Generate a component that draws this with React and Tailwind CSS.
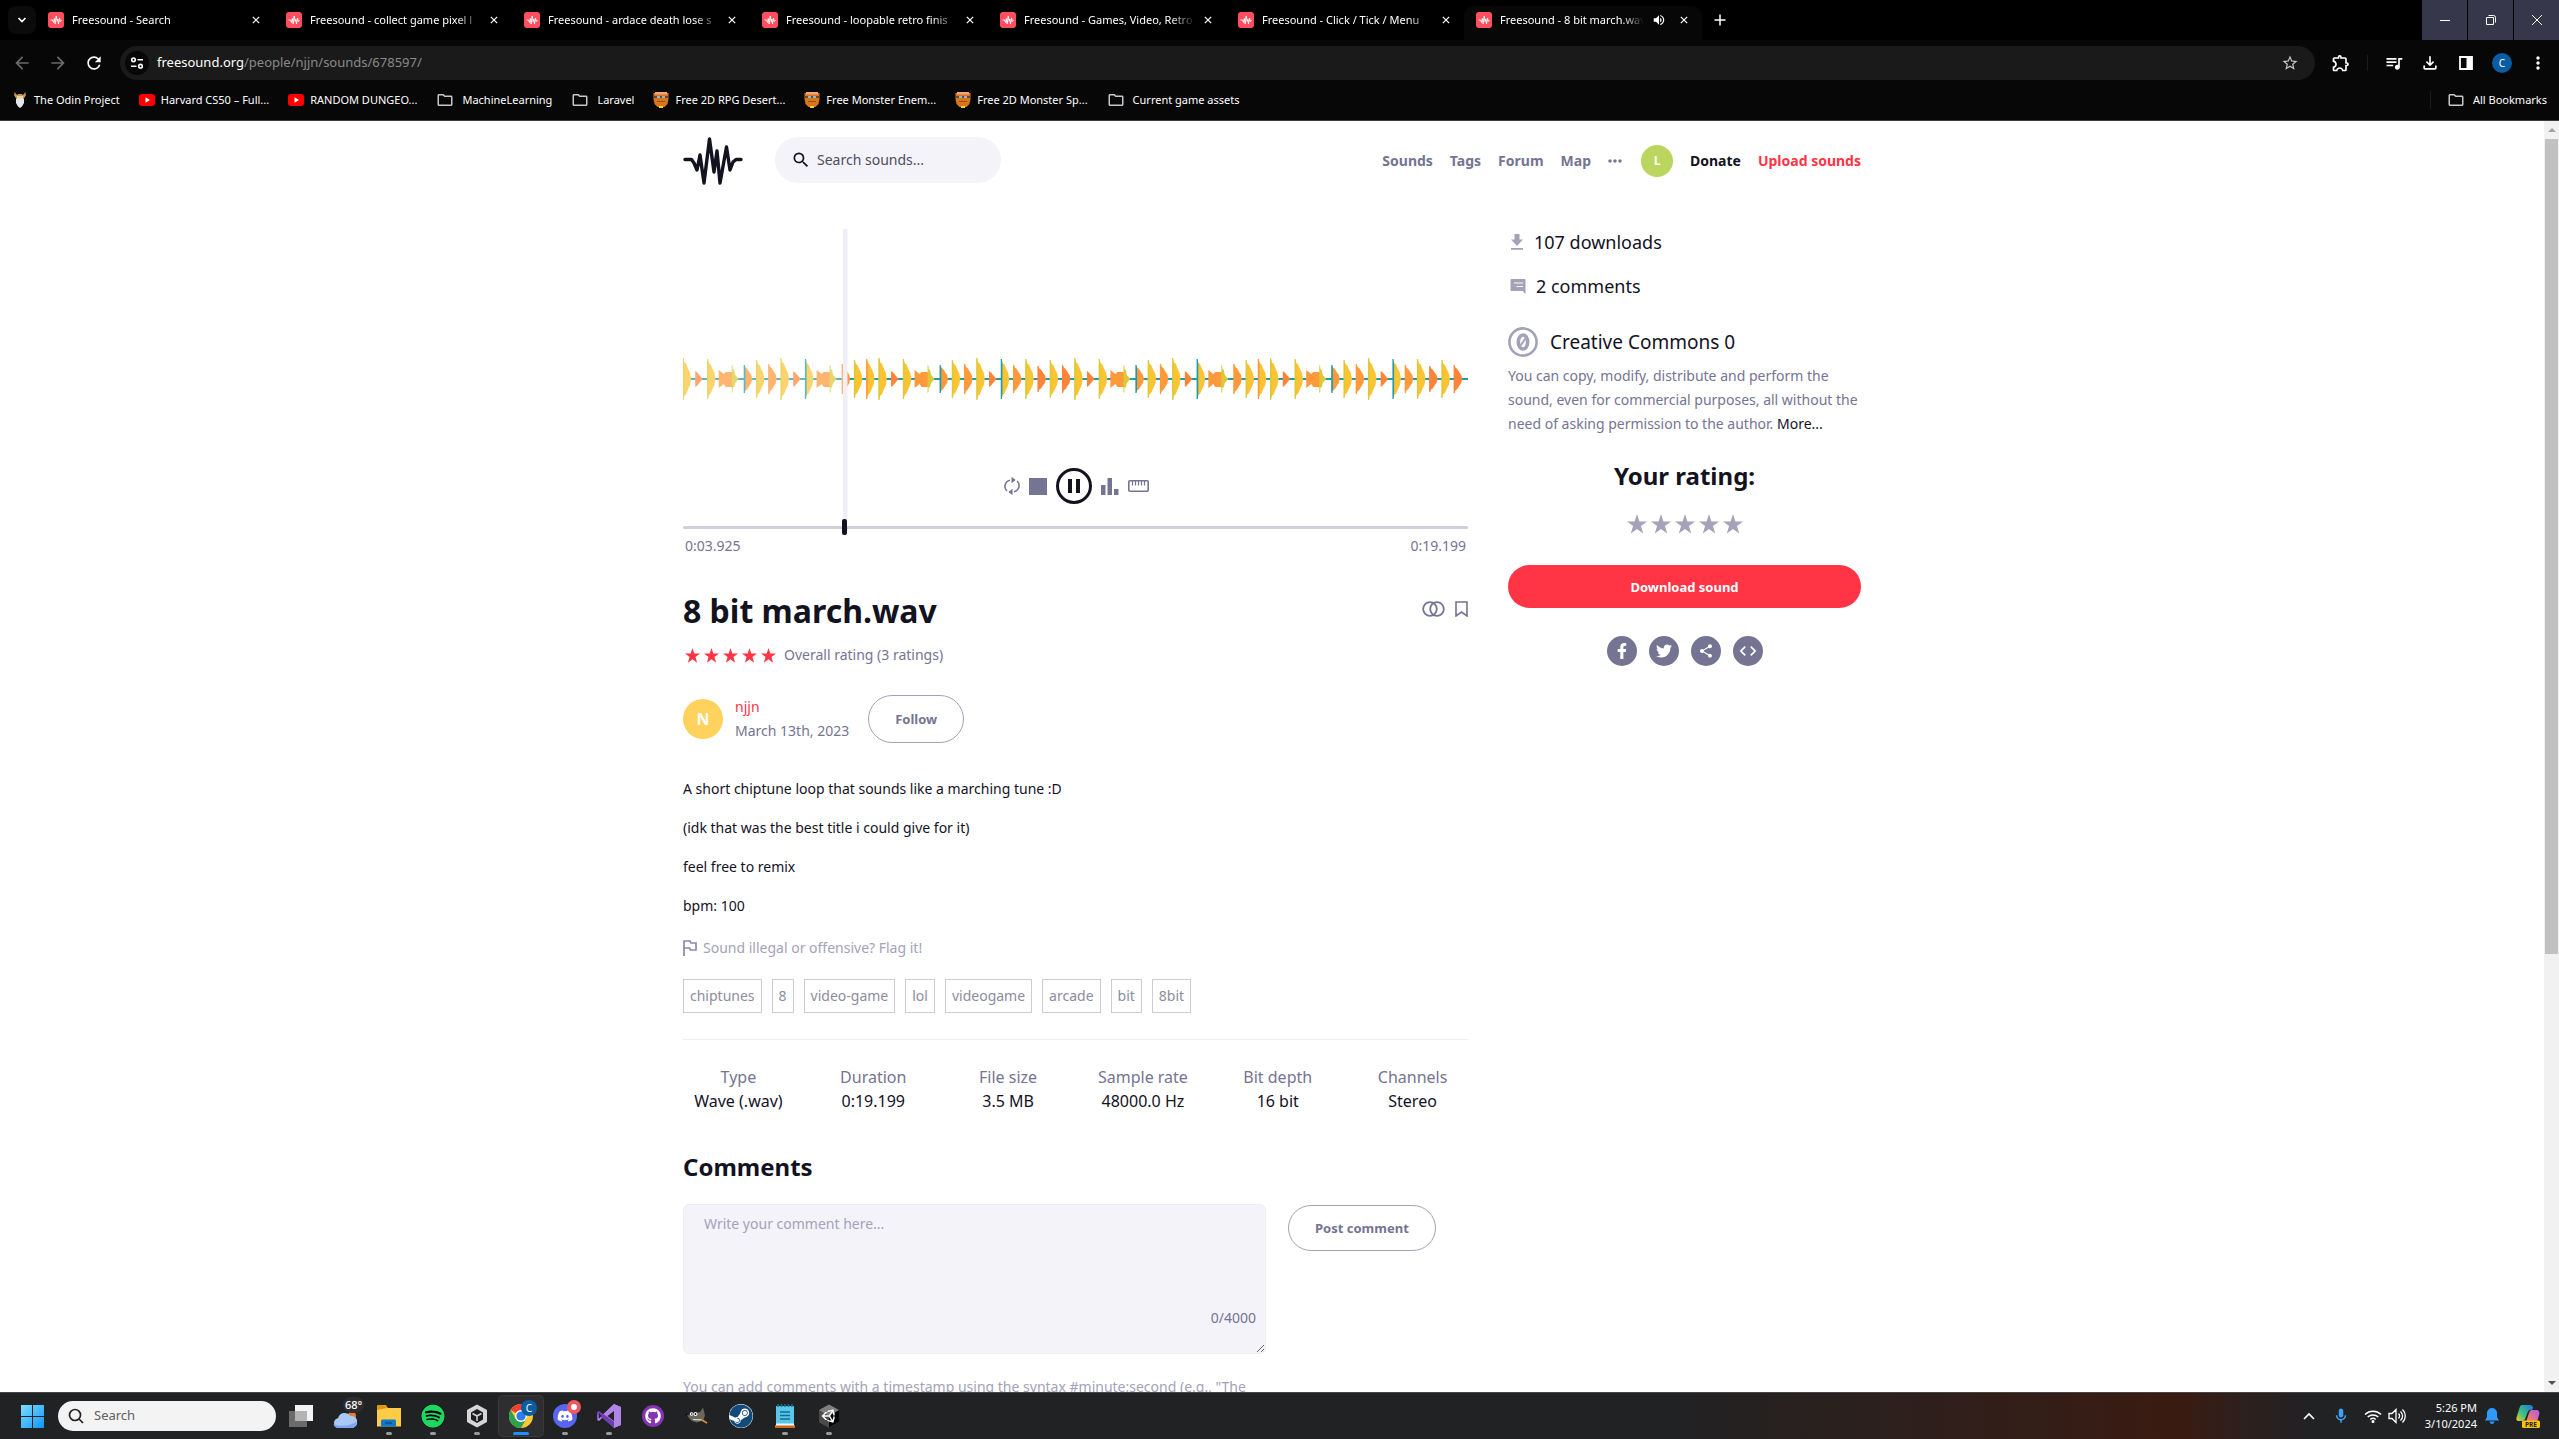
import React from "react";
import {
  MdArrowBack, MdArrowForward, MdRefresh, MdStarBorder, MdOutlineExtension, MdQueueMusic,
  MdOutlineFileDownload, MdMoreVert, MdVolumeUp, MdOutlineFolder, MdSearch, MdMoreHoriz,
  MdShare, MdCode, MdOutlineMic,
} from "react-icons/md";
import { FaSpotify, FaUnity, FaDiscord, FaGithub, FaSteam, FaTwitter, FaFacebookF } from "react-icons/fa";

const TABS = [
  "Freesound - Search",
  "Freesound - collect game pixel l",
  "Freesound - ardace death lose s",
  "Freesound - loopable retro finis",
  "Freesound - Games, Video, Retro",
  "Freesound - Click / Tick / Menu",
  "Freesound - 8 bit march.wav",
];

const BOOKMARKS = [
  ["odin", "The Odin Project"],
  ["youtube", "Harvard CS50 – Full..."],
  ["youtube", "RANDOM DUNGEO..."],
  ["folder", "MachineLearning"],
  ["folder", "Laravel"],
  ["monster", "Free 2D RPG Desert..."],
  ["monster", "Free Monster Enem..."],
  ["monster", "Free 2D Monster Sp..."],
  ["folder", "Current game assets"],
];

const WAVE_PATH = "M2 22.500H8.500L11 26L14 33L17 18L21 46L26.500 2L31 35L34 14L37 46L43.500 10L47 33L50 25L53 22.500H58";

function Favicon() {
  return (
    <svg viewBox="0 0 16 16" className="size-4 shrink-0">
      <rect width="16" height="16" rx="3" fill="#ff4f5e" />
      <path d="M2.500 8H4.500L5.500 10.500L6.300 6.500L7.200 12L8.200 4L9.200 9.500L9.800 7L10.500 12L11.500 6L12.300 9.500L13.500 8" fill="none" stroke="#fff" strokeWidth=".9" strokeLinejoin="round" />
    </svg>
  );
}

function CloseIcon({ className }) {
  return (
    <svg viewBox="0 0 10 10" className={className}>
      <path d="M1 1l8 8M9 1l-8 8" stroke="currentColor" strokeWidth="1.500" />
    </svg>
  );
}

function BookmarkIcon({ kind }) {
  if (kind === "folder") return <MdOutlineFolder className="mr-0.5 size-[18px] shrink-0 text-[#c7c7c7]" />;
  if (kind === "youtube")
    return (
      <svg viewBox="0 0 16 16" className="size-4 shrink-0">
        <rect y="2" width="16" height="12" rx="3" fill="#f00" />
        <path d="M6.500 5.200v5.600L11 8z" fill="#fff" />
      </svg>
    );
  if (kind === "odin")
    return (
      <svg viewBox="0 0 16 16" className="size-4 shrink-0">
        <path d="M2.500 0L5 3L6.500 2H9.500L11 3L13.500 0L13.800 3.500L11.500 7H4.500L2.200 3.500Z" fill="#c9994d" />
        <path d="M5 4h6v4H5z" fill="#f0cf9e" />
        <path d="M4 7l2-1 2 1 2-1 2 1v4l-2 3.500-2 1.500-2-1.500-2-3.500z" fill="#e4e6e8" />
      </svg>
    );
  return (
    <svg viewBox="0 0 16 16" className="size-4 shrink-0">
      <path d="M.5 1h15v6l-1 5-3 3h-7l-3-3-1-5z" fill="#d9761d" />
      <path d="M2 0h12v2.500H2z" fill="#f2a57b" />
      <path d="M1 4h14v2H1z" fill="#6b4a28" />
      <rect x="4" y="4" width="3" height="2" fill="#8fb7c4" />
      <rect x="9" y="4" width="3" height="2" fill="#8fb7c4" />
      <path d="M4 9h8v1H4z" fill="#9d4d0c" />
      <path d="M6 14h4v2H6z" fill="#f3d22b" />
    </svg>
  );
}

function BrowserChrome() {
  return (
    <header className="shrink-0 border-b border-[#3c3c3c] bg-[#070707] text-[11px] text-white">
      <div className="flex h-10 bg-black">
        <div className="flex w-9 items-center justify-end">
          <button aria-label="Search tabs" className="flex size-7 items-center justify-center rounded-lg bg-[#0b0b0b]">
            <svg viewBox="0 0 10 10" className="size-2.5"><path d="M1.500 3l3.500 3.500L8.500 3" fill="none" stroke="#fff" strokeWidth="1.700" /></svg>
          </button>
        </div>
        <div role="tablist" className="flex min-w-0">
          {TABS.map((title, i) => {
            const active = i === TABS.length - 1;
            return (
              <div
                key={title}
                role="tab"
                aria-selected={active}
                className={
                  "mt-1.5 flex w-[238px] min-w-0 items-center gap-2 rounded-t-[10px] pr-3.5 pb-1.5 pl-3 " +
                  (active ? "bg-[#070707]" : "")
                }
              >
                <Favicon />
                <span className="min-w-0 flex-1 overflow-hidden mask-r-from-85% whitespace-nowrap">{title}</span>
                {active && <MdVolumeUp className="size-3.5 shrink-0" />}
                <button aria-label={"Close " + title} className={active ? "ml-1.5 shrink-0" : "shrink-0"}><CloseIcon className="size-2" /></button>
              </div>
            );
          })}
        </div>
        <button aria-label="New tab" className="ml-3 flex items-center">
          <svg viewBox="0 0 12 12" className="size-3"><path d="M6 .5v11M.5 6h11" stroke="#fff" strokeWidth="1.500" /></svg>
        </button>
        <div className="ml-auto flex gap-px">
          <button aria-label="Minimize" className="flex w-[45px] items-center justify-center bg-[#36374a]">
            <svg viewBox="0 0 10 10" className="size-2.5"><path d="M0 5.500h10" stroke="#fff" /></svg>
          </button>
          <button aria-label="Restore" className="flex w-[45px] items-center justify-center bg-[#36374a]">
            <svg viewBox="0 0 10 10" className="size-2.5"><path d="M.5 2.500h7v7h-7zM2.500 .5h5a2 2 0 0 1 2 2v5" fill="none" stroke="#fff" /></svg>
          </button>
          <button aria-label="Close window" className="flex w-[45px] items-center justify-center bg-[#36374a]">
            <svg viewBox="0 0 10 10" className="size-2.5"><path d="M0 0l10 10M10 0L0 10" stroke="#fff" /></svg>
          </button>
        </div>
      </div>

      <div className="flex h-10 items-center pt-1.5 pl-3 pr-[11px]">
        <button aria-label="Back"><MdArrowBack className="size-5 text-[#6b6b6b]" /></button>
        <button aria-label="Forward" className="ml-4"><MdArrowForward className="size-5 text-[#6b6b6b]" /></button>
        <button aria-label="Reload" className="ml-4"><MdRefresh className="size-5" /></button>
        <div className="ml-4 flex h-[34px] flex-1 items-center rounded-full bg-[#1a1a1a] pl-[5px] pr-4">
          <button aria-label="View site information" className="flex size-6 items-center justify-center rounded-full bg-[#070707]">
            <svg viewBox="0 0 14 14" className="size-3.5" fill="none" stroke="#fff" strokeWidth="1.600">
              <circle cx="3.500" cy="3.800" r="1.800" /><path d="M7.500 3.800H13M1 10.200h5.500" /><circle cx="10.500" cy="10.200" r="1.800" />
            </svg>
          </button>
          <div role="textbox" aria-label="Address" className="ml-2 flex-1 text-[13px]">
            freesound.org<span className="text-[#8a8a8a]">/people/njjn/sounds/678597/</span>
          </div>
          <button aria-label="Bookmark this page"><MdStarBorder className="size-[18px] text-[#c7c7c7]" /></button>
        </div>
        <div className="ml-4 flex items-center gap-4">
          <button aria-label="Extensions"><MdOutlineExtension className="size-5" /></button>
          <span className="h-4 w-px bg-[#1c1c1c]" />
          <button aria-label="Media controls"><MdQueueMusic className="size-5" /></button>
          <button aria-label="Downloads"><MdOutlineFileDownload className="size-5" /></button>
          <button aria-label="Side panel">
            <svg viewBox="0 0 20 20" className="size-5"><path d="M4 4h12v12H4z" fill="none" stroke="#fff" strokeWidth="1.800" /><path d="M10.500 4H16v12h-5.500z" fill="#fff" /></svg>
          </button>
          <button aria-label="Profile" className="flex size-5 items-center justify-center rounded-full bg-[#0a5ca3] text-[10px]">C</button>
          <button aria-label="Menu"><MdMoreVert className="size-5" /></button>
        </div>
      </div>

      <nav aria-label="Bookmarks" className="flex h-10 items-center gap-[19px] px-3">
        {BOOKMARKS.map(([kind, label]) => (
          <a key={label} href="#" className="flex items-center gap-1.5 whitespace-nowrap">
            <BookmarkIcon kind={kind} />
            {label}
          </a>
        ))}
        <a href="#" className="ml-auto flex items-center gap-1.5 border-l border-[#1c1c1c] pl-4">
          <BookmarkIcon kind="folder" />
          All Bookmarks
        </a>
      </nav>
    </header>
  );
}

/* Each beat: [height, body colour, edge colour]; "blob" spans two beats. */
const OR = "#ff993a";
const RED = "#ff8438";
const YE = "#fcc332";
const OL = "#dcc838";
const TE = "#1d9cab";
const HEAD = [[21, YE, OL], [8, RED, RED], [20, YE, OL], "blob", null, [14, OR, TE], [19, YE, OL], [15, OR, OR], [21, YE, OL], [8, RED, RED], [20, YE, TE]];
const TAIL_A = ["blob", null, [15, OR, OR], [19, YE, OL], [20, YE, OR]];
const TAIL_B = [[14, OR, OR], [20, YE, OL], [13, RED, RED], [19, YE, OL], [14, RED, RED]];
const BEATS = [...HEAD, ...TAIL_A, ...HEAD, ...TAIL_B, ...HEAD, ...TAIL_A, ...HEAD, ...TAIL_B];
const MID = 150;

function beatShape(b, i) {
  const x = i * 12.24;
  if (!b) return null;
  if (b === "blob")
    return (
      <g key={i} transform={`translate(${x} ${MID})`}>
        <path d="M-1 -9L4 -5L6 -7H14V8H6L4 5L-1 9Z" fill={OR} />
        <path d="M12 -14L13 -13V-10L14.500 -9L15.500 -4L19 0L15.500 4L14.500 8L13 9V13L12 14Z" fill={OL} />
      </g>
    );
  const [h, body, edge] = b;
  const k = h * 0.74;
  return (
    <g key={i} transform={`translate(${x} ${MID})`}>
      {h < 10 ? (
        <path d={`M0 ${-h}L2 ${-h * 0.8}L7.500 0L2 ${h * 0.8}L0 ${h}Z`} fill={body} />
      ) : (
        <>
          <path d={`M0 ${-h}L1.500 ${-k - 1}L3 ${-k}L5.500 ${-k * 0.6}L7 ${-k * 0.4}L8 0L7 ${k * 0.4}L5.500 ${k * 0.6}L3 ${k}L1.500 ${k + 1}L0 ${h}Z`} fill={body} />
          <path d={`M-.5 ${-h}H.7L1.200 ${-k}V${k}L.7 ${h}H-.5Z`} fill={edge} />
        </>
      )}
    </g>
  );
}

function Player() {
  return (
    <section aria-label="Player">
      <div className="relative">
        <svg viewBox="0 0 785 290" className="block w-full" role="img" aria-label="Waveform">
          <path d="M0 150H785" stroke={TE} strokeWidth="2" />
          {BEATS.map(beatShape)}
          <rect width="160" height="290" fill="#fff" opacity=".28" />
          <rect x="160" width="4.500" height="290" fill="#f0eff9" />
        </svg>
        <div className="absolute inset-x-0 bottom-[15px] flex items-center justify-center gap-[9px] pl-0.5 text-[#757492]">
          <button aria-label="Loop">
            <svg viewBox="0 0 16 20" className="h-5 w-4" fill="none" stroke="currentColor" strokeWidth="1.600">
              <path d="M3 15A6.300 6.300 0 0 1 6 4.200M8 4H11M13 5A6.300 6.300 0 0 1 10 15.800M8 16H5" />
              <path d="M7.500 .8L11.500 4L7.500 7.200ZM8.500 12.800L4.500 16L8.500 19.200Z" fill="currentColor" stroke="none" />
            </svg>
          </button>
          <button aria-label="Stop" className="h-[17px] w-[18px] bg-[#757492]" />
          <button aria-label="Pause" className="flex size-9 items-center justify-center gap-1 rounded-full border-3 border-[#13121f]">
            <span className="h-3.5 w-1 bg-[#13121f]" />
            <span className="h-3.5 w-1 bg-[#13121f]" />
          </button>
          <button aria-label="Toggle spectrogram">
            <svg viewBox="0 0 18 17" className="h-[17px] w-[18px]" fill="currentColor"><path d="M0 7h4.500v10H0zM6.500 0h4.500v17H6.500zM13 11h4.500v6H13z" /></svg>
          </button>
          <button aria-label="Toggle ruler">
            <svg viewBox="0 0 21 12" className="h-3 w-[21px]" fill="none" stroke="currentColor">
              <rect x=".8" y=".8" width="19.400" height="10.400" rx="1" strokeWidth="1.600" />
              <path d="M4.500 1v4.500M7.500 1v4.500M10.500 1v4.500M13.500 1v4.500M16.500 1v4.500" strokeWidth="1.200" />
            </svg>
          </button>
        </div>
      </div>
      <input
        type="range"
        aria-label="Playback position"
        min="0"
        max="19199"
        defaultValue="3925"
        className="block h-4 w-full appearance-none bg-transparent [&::-webkit-slider-runnable-track]:h-[3px] [&::-webkit-slider-runnable-track]:rounded-full [&::-webkit-slider-runnable-track]:bg-[#d1d0da] [&::-webkit-slider-thumb]:-mt-[7px] [&::-webkit-slider-thumb]:h-4 [&::-webkit-slider-thumb]:w-[5px] [&::-webkit-slider-thumb]:appearance-none [&::-webkit-slider-thumb]:rounded-xs [&::-webkit-slider-thumb]:bg-[#13121f]"
      />
      <div className="flex justify-between px-0.5 leading-[22px] text-[#757492]">
        <span>0:03.925</span>
        <span>0:19.199</span>
      </div>
    </section>
  );
}

function Star({ className }) {
  return (
    <svg viewBox="0 0 20 20" className={className} fill="currentColor">
      <path d="M10 0L12.400 7.400H20L13.900 12.100L16.200 19.600L10 15L3.800 19.600L6.100 12.100L0 7.400H7.600Z" />
    </svg>
  );
}

const TAGS = ["chiptunes", "8", "video-game", "lol", "videogame", "arcade", "bit", "8bit"];
const INFO = [
  ["Type", "Wave (.wav)"],
  ["Duration", "0:19.199"],
  ["File size", "3.5 MB"],
  ["Sample rate", "48000.0 Hz"],
  ["Bit depth", "16 bit"],
  ["Channels", "Stereo"],
];

function SiteHeader() {
  return (
    <header className="flex h-12 items-center">
      <a href="#" aria-label="Freesound">
        <svg viewBox="0 0 60 48" className="h-12 w-[60px]">
          <path d={WAVE_PATH} fill="none" stroke="#13121f" strokeWidth="3.400" strokeLinejoin="round" strokeLinecap="round" />
        </svg>
      </a>
      <label className="mb-0.5 ml-8 flex h-[46px] w-[226px] items-center gap-1.5 rounded-full bg-[#f4f3fa] pl-4">
        <MdSearch className="size-5 shrink-0" />
        <input type="search" aria-label="Search sounds" placeholder="Search sounds..." className="w-full min-w-0 bg-transparent outline-none placeholder:text-[#4d4c60]" />
      </label>
      <nav className="ml-auto flex items-center font-bold text-[#757492]">
        <a href="#">Sounds</a>
        <a href="#" className="ml-[17px]">Tags</a>
        <a href="#" className="ml-[17px]">Forum</a>
        <a href="#" className="ml-[17px]">Map</a>
        <button aria-label="More" className="ml-3.5"><MdMoreHoriz className="size-5" /></button>
        <a href="#" aria-label="Profile" className="ml-4 flex size-8 items-center justify-center rounded-full bg-[#bbd65f] text-xs text-white">L</a>
        <a href="#" className="ml-[17px] text-[#13121f]">Donate</a>
        <a href="#" className="ml-[17px] text-[#ff3546]">Upload sounds</a>
      </nav>
    </header>
  );
}

function SoundDetails() {
  return (
    <main className="min-w-0">
      <Player />
      <div className="mt-[30px] flex items-start justify-between">
        <h1 className="text-[32px] leading-12 font-bold">8 bit march.wav</h1>
        <div className="flex items-center gap-2.5 pt-3.5 text-[#757492]">
          <button aria-label="Similar sounds">
            <svg viewBox="0 0 23 16" className="h-4 w-[23px]" fill="none" stroke="currentColor" strokeWidth="1.800"><circle cx="8" cy="8" r="6.800" /><circle cx="15" cy="8" r="6.800" /></svg>
          </button>
          <button aria-label="Bookmark sound">
            <svg viewBox="0 0 13 16" className="h-4 w-[13px]" fill="none" stroke="currentColor" strokeWidth="1.600"><path d="M1 1h11v14l-5.500-4L1 15z" /></svg>
          </button>
        </div>
      </div>
      <div className="mt-2 flex h-6 items-center text-[#757492]">
        <div className="flex gap-1 pl-0.5 text-[#ff3546]" role="img" aria-label="5 stars">
          {[0, 1, 2, 3, 4].map((n) => <Star key={n} className="size-[15px]" />)}
        </div>
        <span className="ml-2">Overall rating (3 ratings)</span>
      </div>
      <div className="mt-7 flex items-center">
        <div className="flex size-10 items-center justify-center rounded-full bg-[#ffd25e] text-base font-bold text-white">N</div>
        <div className="ml-3 text-[#757492]">
          <a href="#" className="block text-[#ff3546]">njjn</a>
          <span className="block">March 13th, 2023</span>
        </div>
        <button className="ml-[19px] h-12 rounded-full border border-[#a3a2b8] px-[26px] text-[13px] font-bold text-[#757492]">Follow</button>
      </div>
      <div className="mt-[34px] flex flex-col gap-[15px]">
        <p>A short chiptune loop that sounds like a marching tune :D</p>
        <p>(idk that was the best title i could give for it)</p>
        <p>feel free to remix</p>
        <p>bpm: 100</p>
      </div>
      <a href="#" className="mt-[18px] flex items-center gap-1.5 text-[#a3a2b8]">
        <svg viewBox="0 0 14 16" className="h-4 w-3.5" fill="none" stroke="#8b8aa5" strokeWidth="1.700"><path d="M1 16V1h6l1 2h5v7H7.500l-1-2H1" /></svg>
        Sound illegal or offensive? Flag it!
      </a>
      <ul className="mt-[19px] flex flex-wrap gap-2.5 text-[#8d8c9c]">
        {TAGS.map((t) => (
          <li key={t}><a href="#" className="flex h-[34px] items-center border border-[#cccbd6] px-1.5">{t}</a></li>
        ))}
      </ul>
      <hr className="mt-[26px] border-[#eeeef2]" />
      <dl className="-mx-3 mt-[25px] grid grid-cols-6 text-center text-base leading-6">
        {INFO.map(([k, v]) => (
          <div key={k}>
            <dt className="text-[#757492]">{k}</dt>
            <dd>{v}</dd>
          </div>
        ))}
      </dl>
      <h2 className="mt-9 text-2xl leading-9 font-bold">Comments</h2>
      <form className="mt-[19px] flex items-start gap-[22px]">
        <div className="relative w-[583px] min-w-0">
          <textarea aria-label="Comment" placeholder="Write your comment here..." className="block h-[150px] w-full rounded-md border border-[#eeedf7] bg-[#f4f3fa] px-5 py-[7px] placeholder:text-[#a3a2b8]" />
          <span className="absolute right-2.5 bottom-6 text-[#757492]">0/4000</span>
        </div>
        <button type="button" className="mt-px h-[46px] rounded-full border border-[#a3a2b8] px-[26px] text-[13px] font-bold whitespace-nowrap text-[#757492]">Post comment</button>
      </form>
      <p className="mt-[21px] text-[#a3a2b8]">You can add comments with a timestamp using the syntax #minute:second (e.g., "The</p>
    </main>
  );
}

function Sidebar() {
  return (
    <aside className="min-w-0 pt-px">
      <p className="flex items-center text-lg leading-6">
        <svg viewBox="0 0 14 16" className="mr-2.5 ml-0.5 h-4 w-3.5" fill="#a3a2b8"><path d="M4.500 0h5v5.500H13L7 12 1 5.500h3.500zM1 14h12v1.800H1z" /></svg>
        107 downloads
      </p>
      <p className="mt-5 flex items-center text-lg leading-6">
        <svg viewBox="0 0 16 16" className="mr-2.5 ml-0.5 size-4"><path d="M1.500 1h13a1 1 0 0 1 1 1v14l-3-3h-11a1 1 0 0 1-1-1V2a1 1 0 0 1 1-1z" fill="#a3a2b8" /><path d="M4 5h9M6.500 8.500H13" stroke="#fff" strokeWidth="1.200" /></svg>
        2 comments
      </p>
      <p className="mt-7 flex h-8 items-center text-[19px]">
        <svg viewBox="0 0 30 30" className="mr-3 size-[30px]" fill="none" stroke="#a3a2b8"><circle cx="15" cy="15" r="13.600" strokeWidth="2.600" /><ellipse cx="15" cy="15" rx="4.700" ry="7" strokeWidth="3.600" /><path d="M12.500 18.500L17.500 11.500" strokeWidth="2" /></svg>
        Creative Commons 0
      </p>
      <p className="mt-1.5 text-[#757492]">
        You can copy, modify, distribute and perform the sound, even for commercial purposes, all without the need of asking permission to the author. <a href="#" className="text-[#13121f]">More...</a>
      </p>
      <h2 className="mt-6 text-center text-2xl leading-8 font-bold">Your rating:</h2>
      <div className="mt-[22px] flex justify-center gap-1 text-[#a3a2b8]">
        {[1, 2, 3, 4, 5].map((n) => <button key={n} aria-label={"Rate " + n}><Star className="size-5" /></button>)}
      </div>
      <button className="mt-[31px] h-[43px] w-full rounded-full bg-[#ff3546] text-[13px] font-bold text-white">Download sound</button>
      <div className="mt-7 flex justify-center gap-3 text-white">
        <a href="#" aria-label="Facebook" className="flex size-[30px] items-center justify-center rounded-full bg-[#757492]"><FaFacebookF className="size-4" /></a>
        <a href="#" aria-label="Twitter" className="flex size-[30px] items-center justify-center rounded-full bg-[#757492]"><FaTwitter className="size-4" /></a>
        <a href="#" aria-label="Share" className="flex size-[30px] items-center justify-center rounded-full bg-[#757492]"><MdShare className="size-4" /></a>
        <a href="#" aria-label="Embed" className="flex size-[30px] items-center justify-center rounded-full bg-[#757492]"><MdCode className="size-5" /></a>
      </div>
    </aside>
  );
}

function Scrollbar() {
  return (
    <div className="flex w-[15px] shrink-0 flex-col items-center bg-[#f1f1f1]" aria-hidden="true">
      <svg viewBox="0 0 8 4" className="my-[7px] h-1 w-2" fill="#a3a3a3"><path d="M0 4L4 0L8 4z" /></svg>
      <div className="min-h-0 w-[13px] flex-[816] bg-[#c1c1c1]" />
      <div className="flex-[420]" />
      <svg viewBox="0 0 8 4" className="my-[7px] h-1 w-2" fill="#505050"><path d="M0 0L4 4L8 0z" /></svg>
    </div>
  );
}

function VisualStudio() {
  return (
    <svg viewBox="0 0 24 24" className="size-6">
      <path d="M17 0L24 3V21L17 24L2 9.500L0 8V16L2 15L17 0Z" fill="#8a5cc9" />
      <path d="M17 0L24 3V21L17 24V17.500L8 11L2 17L0 16L17 0Z" fill="#b184e8" />
      <path d="M0 8L2 7L17 18V24L0 9.500Z" fill="#6f3fb0" />
      <path d="M17 7V17L10.500 12ZM2 9.500V14.500L4.500 12Z" fill="#232325" />
    </svg>
  );
}

const APPS = [
  ["Task view", false, (
    <svg viewBox="0 0 24 22" className="h-[22px] w-6"><rect x="6" width="18" height="16" fill="#f3f3f3" /><rect y="6" width="18" height="16" fill="#6b6b6b" /><rect x="6" y="6" width="12" height="10" fill="#b4b4b4" /></svg>
  )],
  ["Weather", false, (
    <span className="relative">
      <svg viewBox="0 0 24 24" className="mt-0.5 size-6"><circle cx="19" cy="11" r="4" fill="#ee7b30" /><path d="M5 23a5 5 0 0 1 0-9.800A7 7 0 0 1 17.500 11 6 6 0 0 1 19 23z" fill="#a9c8f7" /><path d="M5 23a5 5 0 0 1-4.500-4C6 22 17 21 23.500 17A5.500 5.500 0 0 1 19 23z" fill="#7da6ec" /></svg>
      <span className="absolute -top-1.5 left-2.5 rounded-full bg-[#2d2d2f] px-0.5 text-[11px] leading-4 font-medium text-white">68°</span>
    </span>
  )],
  ["File Explorer", true, (
    <svg viewBox="0 0 24 22" className="h-[22px] w-6"><path d="M0 1a1 1 0 0 1 1-1h8l2 3v3H0z" fill="#dd9a08" /><path d="M0 5l10-2h14v18.500H0z" fill="#fdcb45" /><path d="M4 21.500V16a1.500 1.500 0 0 1 1.500-1.500h12A1.500 1.500 0 0 1 19 16v5.500z" fill="#0f78c8" /><path d="M8 18h7" stroke="#0a4f8d" strokeWidth="1.500" /></svg>
  )],
  ["Spotify", true, <FaSpotify className="size-6 rounded-full bg-black text-[#1ed760]" />],
  ["Unity Hub", true, (
    <svg viewBox="0 0 24 24" className="size-6"><path d="M12 .5L22 6v12l-10 5.500L2 18V6z" fill="#d6d6d6" /><path d="M12 5l6 3.400v7L12 19l-6-3.600v-7z" fill="#1d1d1d" /><path d="M12 12v5M12 12L7.500 9.500M12 12l4.500-2.500" stroke="#d6d6d6" strokeWidth="1.500" /></svg>
  )],
  ["Google Chrome", "active", (
    <span className="relative">
      <svg viewBox="0 0 24 24" className="size-6">
        <circle cx="12" cy="12" r="12" fill="#fcc934" />
        <path d="M12 12L1.600 6A12 12 0 0 1 22.400 6z" fill="#ea4335" />
        <path d="M1.600 6A12 12 0 0 0 12 24l5.200-9L12 12L6.800 15z" fill="#2fa24f" />
        <circle cx="12" cy="12" r="6" fill="#fff" /><circle cx="12" cy="12" r="4.600" fill="#2f7de9" />
      </svg>
      <span className="absolute -top-1 left-3 flex size-4 items-center justify-center rounded-full bg-[#0a5ca3] text-[10px] text-white">C</span>
    </span>
  )],
  ["Discord", true, (
    <span className="relative flex size-6 items-center justify-center rounded-full bg-[#5865f2]">
      <FaDiscord className="size-4 text-white" />
      <span className="absolute -top-1 left-3.5 size-3.5 rounded-full border-4 border-[#f0585f] bg-white" />
    </span>
  )],
  ["Visual Studio", true, <VisualStudio />],
  ["GitHub Desktop", false, (
    <span className="flex size-[22px] items-center justify-center rounded-full bg-[#8534b3]"><FaGithub className="size-4 text-white" /></span>
  )],
  ["GIMP", false, (
    <svg viewBox="0 0 24 20" className="h-5 w-6"><path d="M1 8l3 1.500L6 6l4 1.500L15 6l3-4.500L20 9l-1.500 5L12 16.500 7 15 4 12z" fill="#6b675c" /><circle cx="6.500" cy="8" r="1.800" fill="#fff" /><circle cx="10.500" cy="8" r="2" fill="#fff" /><circle cx="6.800" cy="8" r=".8" /><circle cx="10.500" cy="8" r=".9" /><circle cx="1.500" cy="8.500" r="1.200" fill="#111" /><path d="M8 13.500l8 .3" stroke="#ddd" strokeWidth="1.200" /><path d="M16 13.500l6 3.500" stroke="#e08a35" strokeWidth="1.800" /></svg>
  )],
  ["Steam", false, <FaSteam className="size-6 rounded-full bg-white text-[#114a7d]" />],
  ["Notepad", true, (
    <svg viewBox="0 0 20 24" className="h-6 w-5"><path d="M1 2h18v20H1z" fill="#57c8ea" /><path d="M0 21h20v3H0z" fill="#c96c20" /><path d="M1 19.500h18v2H1z" fill="#f4f4f4" /><path d="M3 0v3M6.500 0v3M10 0v3M13.500 0v3M17 0v3" stroke="#1a6f93" strokeWidth="1.500" /><path d="M5 8h10M5 11.500h10M5 15h10" stroke="#146a92" strokeWidth="1.500" /></svg>
  )],
  ["Unity", true, (
    <span className="relative flex size-6 items-center justify-center">
      <svg viewBox="0 0 24 24" className="absolute size-6"><path d="M12 .5L22 6v12l-10 5.500L2 18V6z" fill="#7f7f7f" /><path d="M12 12L22 6v12l-10 5.500z" fill="#050505" /><path d="M12 12L2 6v12l10 5.500z" fill="#4a4a4a" /></svg>
      <FaUnity className="relative size-4 text-white" />
    </span>
  )],
];

function Taskbar() {
  return (
    <footer className="flex h-[47px] shrink-0 items-center border-t border-[#47474a] bg-[#212224] bg-linear-to-r from-[#212224] from-65% via-[#3a1b12] via-85% to-[#212224] to-90% pr-[19px] pl-[21px] text-white">
      <button aria-label="Start">
        <svg viewBox="0 0 23 23" className="size-[23px]">
          <defs><linearGradient id="win" x1="0" y1="0" x2="1" y2="1"><stop offset="0" stopColor="#7fdcff" /><stop offset="1" stopColor="#0e97f7" /></linearGradient></defs>
          <path d="M0 0h11v11H0zM12 0h11v11H12zM0 12h11v11H0zM12 12h11v11H12z" fill="url(#win)" />
        </svg>
      </button>
      <label className="ml-3.5 flex h-[30px] w-[218px] items-center gap-2.5 rounded-full bg-[#f3f3f3] px-2.5">
        <svg viewBox="0 0 16 16" className="size-4 shrink-0" fill="none" stroke="#222" strokeWidth="1.700"><circle cx="7" cy="7" r="5.500" /><path d="M11 11l4 4" /></svg>
        <input type="search" aria-label="Search Windows" placeholder="Search" className="w-full min-w-0 bg-transparent text-[13px] outline-none placeholder:text-[#606060]" />
      </label>
      <div className="ml-[3px] flex">
        {APPS.map(([name, open, icon]) => (
          <button
            key={name}
            aria-label={name}
            className={"flex h-10 w-11 flex-col items-center rounded-sm pt-2 " + (open === "active" ? "bg-[#2e2e30] ring-1 ring-[#3a3a3c]" : "")}
          >
            <span className="flex h-6 items-center">{icon}</span>
            {open && <span className={open === "active" ? "mt-1 h-[3px] w-4 shrink-0 rounded-full bg-[#1a93ff]" : "mt-1 h-[3px] w-1.5 shrink-0 rounded-full bg-[#9a9a9a]"} />}
          </button>
        ))}
      </div>
      <div className="ml-auto flex items-center">
        <button aria-label="Show hidden icons"><svg viewBox="0 0 12 8" className="h-2 w-3"><path d="M1 7l5-5 5 5" fill="none" stroke="#fff" strokeWidth="1.600" /></svg></button>
        <MdOutlineMic className="ml-[17px] size-[18px] text-[#3da2f5]" />
        <svg viewBox="0 0 18 14" className="ml-3.5 h-3.5 w-[18px]" fill="none" stroke="#fff" strokeWidth="1.500"><path d="M1 5.500a11.500 11.500 0 0 1 16 0M3.700 8a7.800 7.800 0 0 1 10.600 0M6.300 10.500a4 4 0 0 1 5.400 0" /><circle cx="9" cy="12.500" r=".8" fill="#fff" /></svg>
        <svg viewBox="0 0 18 16" className="ml-1.5 h-4 w-[18px]" fill="none" stroke="#fff" strokeWidth="1.300"><path d="M1 5.500h3l4-4v13l-4-4H1zM10.500 5.500a3.500 3.500 0 0 1 0 5M12.500 3.500a6 6 0 0 1 0 9M14.500 1.500a9 9 0 0 1 0 13" /></svg>
        <div className="ml-[19px] text-right text-[11px] leading-4">
          <div>5:26 PM</div>
          <div>3/10/2024</div>
        </div>
        <svg viewBox="0 0 14 16" className="ml-2 h-4 w-3.5" fill="#2f9bff"><path d="M7 0a5 5 0 0 1 5 5v4l2 3.500H0L2 9V5a5 5 0 0 1 5-5zM4.500 13.500h5a2.500 2.500 0 0 1-5 0z" /></svg>
        <svg viewBox="0 0 24 24" className="ml-[17px] size-6">
          <defs>
            <linearGradient id="cop1" x1="0" y1="1" x2="1" y2="0"><stop offset="0" stopColor="#f6c829" /><stop offset=".4" stopColor="#3fc47c" /><stop offset="1" stopColor="#1777e0" /></linearGradient>
            <linearGradient id="cop2" x1="0" y1="1" x2="1" y2="0"><stop offset="0" stopColor="#ff8a4c" /><stop offset="1" stopColor="#b657e8" /></linearGradient>
          </defs>
          <path d="M6 1h8a3 3 0 0 1 3 3l-1 2c-3-1-4 1-5 4l-2 5c-1 2-2 2-4 2H3c-3 0-3-2-2-5L3.500 4C4 2 5 1 6 1z" fill="url(#cop1)" />
          <path d="M16 6h4c3 0 4 2 3 5l-2 7H10l3-9c.5-2 1.500-3 3-3z" fill="url(#cop2)" />
          <rect x="6" y="16.500" width="18" height="7.500" rx="1.500" fill="#fcc30b" />
          <text x="15" y="22.700" fontSize="6.500" fontWeight="700" textAnchor="middle" fill="#222">PRE</text>
        </svg>
      </div>
    </footer>
  );
}

export default function App() {
  return (
    <div className="flex h-screen flex-col overflow-hidden bg-white font-['Noto_Sans','Open_Sans',sans-serif]">
      <BrowserChrome />
      <div className="flex min-h-0 flex-1">
        <div className="min-w-0 flex-1 overflow-hidden px-6 pt-4 text-sm leading-6 text-[#13121f]">
          <div className="mx-auto max-w-[1178px]">
            <SiteHeader />
            <div className="mt-11 grid grid-cols-[785fr_353fr] gap-10">
              <SoundDetails />
              <Sidebar />
            </div>
          </div>
        </div>
        <Scrollbar />
      </div>
      <Taskbar />
    </div>
  );
}
